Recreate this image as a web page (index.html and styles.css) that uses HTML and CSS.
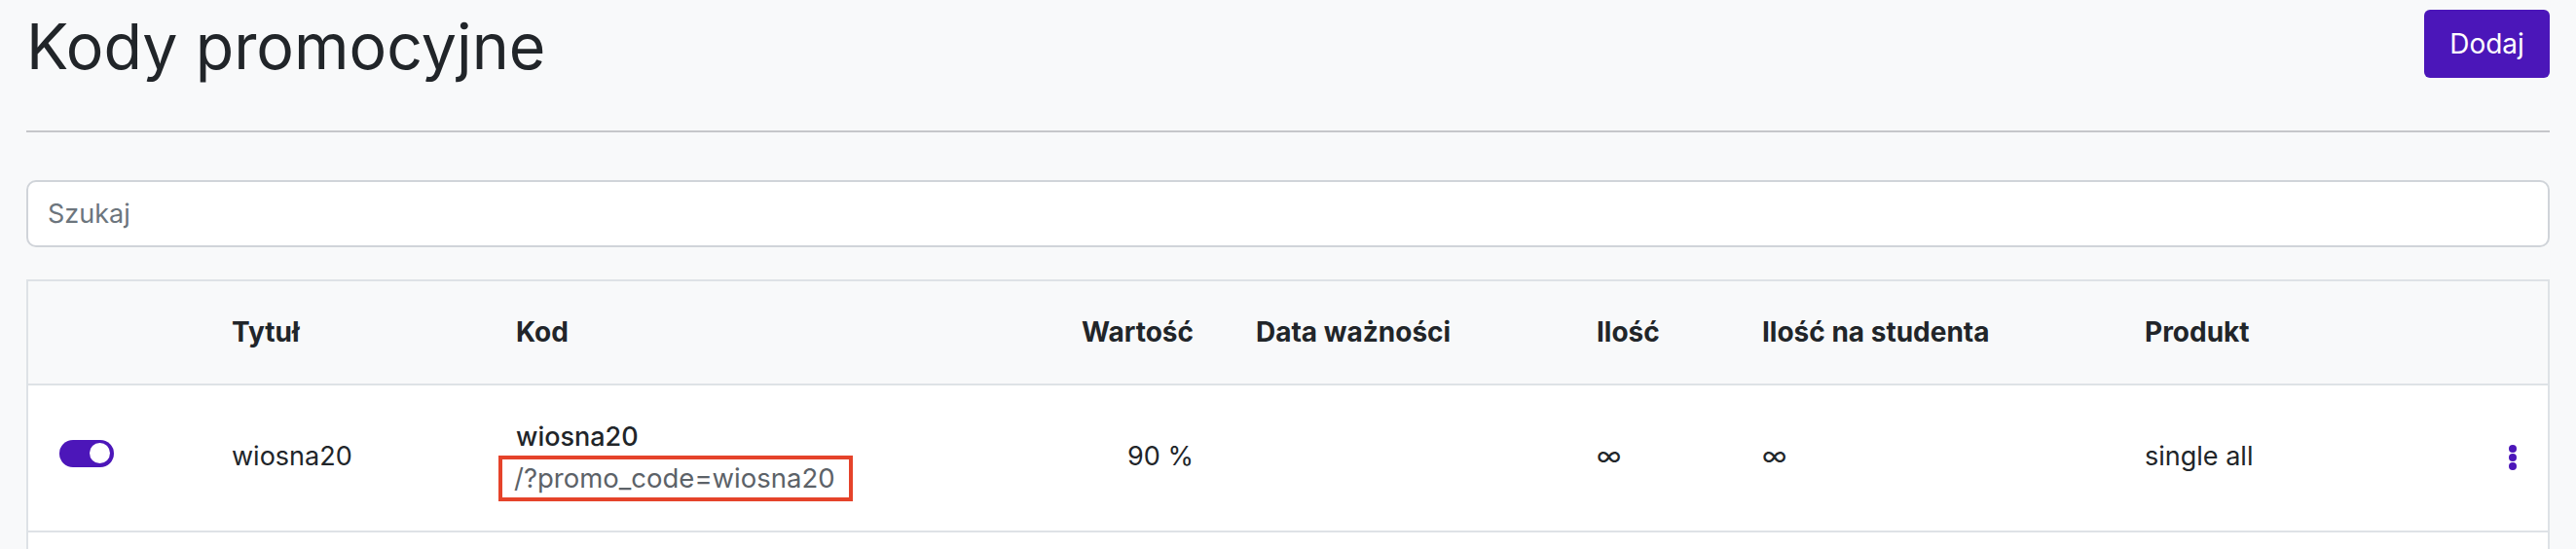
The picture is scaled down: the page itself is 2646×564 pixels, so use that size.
FILE: index.html
```html
<!DOCTYPE html>
<html lang="pl">
<head>
<meta charset="utf-8">
<title>Kody promocyjne</title>
<link rel="stylesheet" href="styles.css">
</head>
<body>
<div class="page">
  <header class="page-header">
    <h1 class="page-title">Kody promocyjne</h1>
    <button class="btn-primary" type="button">Dodaj</button>
  </header>

  <div class="search">
    <input class="search-input" type="text" placeholder="Szukaj">
  </div>

  <table class="codes">
    <colgroup>
      <col class="c-switch">
      <col class="c-title">
      <col class="c-code">
      <col class="c-value">
      <col class="c-date">
      <col class="c-qty">
      <col class="c-per">
      <col class="c-product">
      <col>
    </colgroup>
    <thead>
      <tr>
        <th></th>
        <th>Tytuł</th>
        <th>Kod</th>
        <th class="num">Wartość</th>
        <th>Data ważności</th>
        <th>Ilość</th>
        <th>Ilość na studenta</th>
        <th>Produkt</th>
        <th></th>
      </tr>
    </thead>
    <tbody>
      <tr>
        <td><span class="switch"><span class="knob"></span></span></td>
        <td>wiosna20</td>
        <td>
          <div class="code">
            <span class="code-name">wiosna20</span>
            <span class="code-link">/?promo_code=wiosna20</span>
          </div>
        </td>
        <td class="num">90 %</td>
        <td></td>
        <td>∞</td>
        <td>∞</td>
        <td>single all</td>
        <td class="actions">
          <svg class="kebab" width="8" height="26" viewBox="0 0 8 26" aria-hidden="true">
            <circle cx="4" cy="4" r="4"/>
            <circle cx="4" cy="13" r="4"/>
            <circle cx="4" cy="22" r="4"/>
          </svg>
        </td>
      </tr>
      <tr class="filler">
        <td></td><td></td><td></td><td></td><td></td><td></td><td></td><td></td><td></td>
      </tr>
    </tbody>
  </table>
</div>
</body>
</html>
```

FILE: styles.css
```css
* { box-sizing: border-box; }

html, body {
  margin: 0;
  padding: 0;
  background: #f8f9fa;
  color: #212529;
  font-family: Inter, "Noto Sans", "Liberation Sans", sans-serif;
}

.page {
  padding: 10px 27px 0 27px;
}

.page-header {
  display: flex;
  justify-content: space-between;
  align-items: flex-start;
  padding-bottom: 47px;
  border-bottom: 2px solid #c5c6ca;
}

.page-title {
  margin: 0;
  font-size: 64.5px;
  font-weight: 400;
  line-height: 77px;
  color: #212529;
}

.btn-primary {
  width: 129px;
  height: 70px;
  border: 0;
  border-radius: 6px;
  background: #4b16b9;
  color: #ffffff;
  font-family: Inter, "Noto Sans", sans-serif;
  font-size: 28px;
  font-weight: 400;
  padding: 0;
}

.search {
  margin-top: 49px;
}

.search-input {
  display: block;
  width: 100%;
  height: 69px;
  border: 2px solid #d0d4d9;
  border-radius: 10px;
  background: #ffffff;
  padding: 0 20px;
  font-family: Inter, "Noto Sans", sans-serif;
  font-size: 27px;
  color: #212529;
  outline: none;
}

.search-input::placeholder {
  color: #6c757d;
}

.codes {
  margin-top: 33px;
  width: 100%;
  table-layout: fixed;
  border-collapse: separate;
  border-spacing: 0;
  border: 2px solid #dee2e6;
  background: #ffffff;
  font-size: 27px;
  line-height: 40.5px;
}

.c-switch { width: 177px; }
.c-title { width: 292px; }
.c-code { width: 422px; }
.c-value { width: 338px; }
.c-date { width: 350px; }
.c-qty { width: 170px; }
.c-per { width: 393px; }
.c-product { width: 372px; }

.codes th {
  background: #f8f9fa;
  padding: 32px;
  text-align: left;
  font-size: 28px;
  font-weight: 700;
  white-space: nowrap;
  border-bottom: 2px solid #dee2e6;
}

.codes td {
  padding: 33px 32px 34px 32px;
  vertical-align: middle;
  border-bottom: 2px solid #dee2e6;
  white-space: nowrap;
}

.codes .num {
  text-align: right;
}

.switch {
  display: flex;
  justify-content: flex-end;
  align-items: center;
  width: 56px;
  height: 28px;
  margin-bottom: 8px;
  padding: 0 4px;
  border-radius: 14px;
  background: #4c16b9;
}

.knob {
  width: 21px;
  height: 21px;
  border-radius: 50%;
  background: #ffffff;
}

.code {
  display: flex;
  flex-direction: column;
  align-items: flex-start;
}

.code-name {
  font-weight: 500;
  line-height: 39px;
}

.code-link {
  line-height: 39px;
  margin: 4px 0 0 -14px;
  padding: 0 14px 0 12px;
  outline: 4px solid #e5432a;
  color: #5c6268;
  font-size: 27.5px;
}

.actions {
  text-align: right;
}

.kebab {
  display: block;
  margin-left: auto;
  fill: #4c16b9;
}

.filler td {
  height: 110px;
  border-bottom: 0;
}
```
